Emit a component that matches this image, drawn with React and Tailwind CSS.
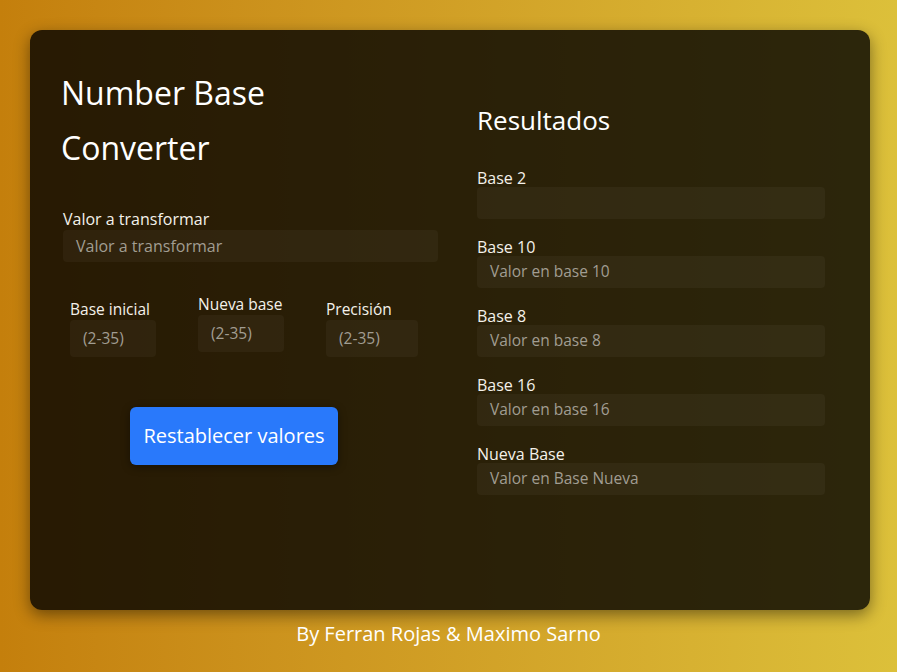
import React from "react";

const font = { fontFamily: '"Open Sans", "Noto Sans", sans-serif' };

function ResultField({ label, placeholder }) {
  return (
    <div className="flex flex-col">
      <label className="text-[16px] leading-[16px] text-[#f4f1ea] mb-[1px]">{label}</label>
      <div className="h-[32px] w-[348px] rounded-[4px] bg-white/[0.04] px-[13px] flex items-center text-[15.5px] text-[#a19d92]">
        {placeholder}
      </div>
    </div>
  );
}

function SmallField({ label, width, up }) {
  return (
    <div className={`flex flex-col ${up ? "-mt-[5px]" : ""}`}>
      <label className="text-[15.5px] leading-[16px] text-[#f4f1ea] mb-[3px] whitespace-nowrap">{label}</label>
      <div
        className="h-[37px] rounded-[4px] bg-white/[0.04] px-[13px] flex items-center text-[15.5px] text-[#a19d92]"
        style={{ width }}
      >
        (2-35)
      </div>
    </div>
  );
}

export default function App() {
  return (
    <div
      className="w-[897px] h-[672px] overflow-hidden bg-gradient-to-r from-[#c47f0c] to-[#dcc03a] flex flex-col"
      style={font}
    >
      <div className="mt-[30px] ml-[30px] w-[840px] h-[580px] rounded-[12px] bg-black/80 shadow-[0_5px_16px_rgba(0,0,0,0.45)] flex pl-[31px]">
        <div className="w-[377px] flex flex-col pt-[35px]">
          <h1 className="text-[32px] leading-[55px] text-white font-normal">
            Number Base
            <br />
            Converter
          </h1>
          <div className="mt-[36px] flex flex-col">
            <label className="ml-[2px] text-[16px] leading-[16px] text-[#f4f1ea] mb-[3px]">Valor a transformar</label>
            <div className="ml-[2px] h-[32px] w-[375px] rounded-[4px] bg-white/[0.04] px-[13px] flex items-center text-[16px] text-[#a19d92]">
              Valor a transformar
            </div>
          </div>
          <div className="mt-[39px] ml-[9px] flex items-start">
            <div className="w-[128px]">
              <SmallField label="Base inicial" width={86} />
            </div>
            <div className="w-[128px]">
              <SmallField label="Nueva base" width={86} up />
            </div>
            <div>
              <SmallField label="Precisión" width={92} />
            </div>
          </div>
          <div className="mt-[50px] ml-[69px]">
            <button className="w-[208px] h-[58px] rounded-[6px] bg-[#2979fb] text-white text-[20px] shadow-[0_2px_8px_rgba(0,0,0,0.4)]">
              Restablecer valores
            </button>
          </div>
        </div>
        <div className="ml-[39px] w-[348px] flex flex-col pt-[70px]">
          <h2 className="text-[26px] leading-[40px] text-white font-normal mb-[30px]">Resultados</h2>
          <div className="flex flex-col gap-[20px]">
            <ResultField label="Base 2" placeholder="" />
            <ResultField label="Base 10" placeholder="Valor en base 10" />
            <ResultField label="Base 8" placeholder="Valor en base 8" />
            <ResultField label="Base 16" placeholder="Valor en base 16" />
            <ResultField label="Nueva Base" placeholder="Valor en Base Nueva" />
          </div>
        </div>
      </div>
      <p className="mt-[9px] text-[20px] text-white text-center">By Ferran Rojas &amp; Maximo Sarno</p>
    </div>
  );
}
